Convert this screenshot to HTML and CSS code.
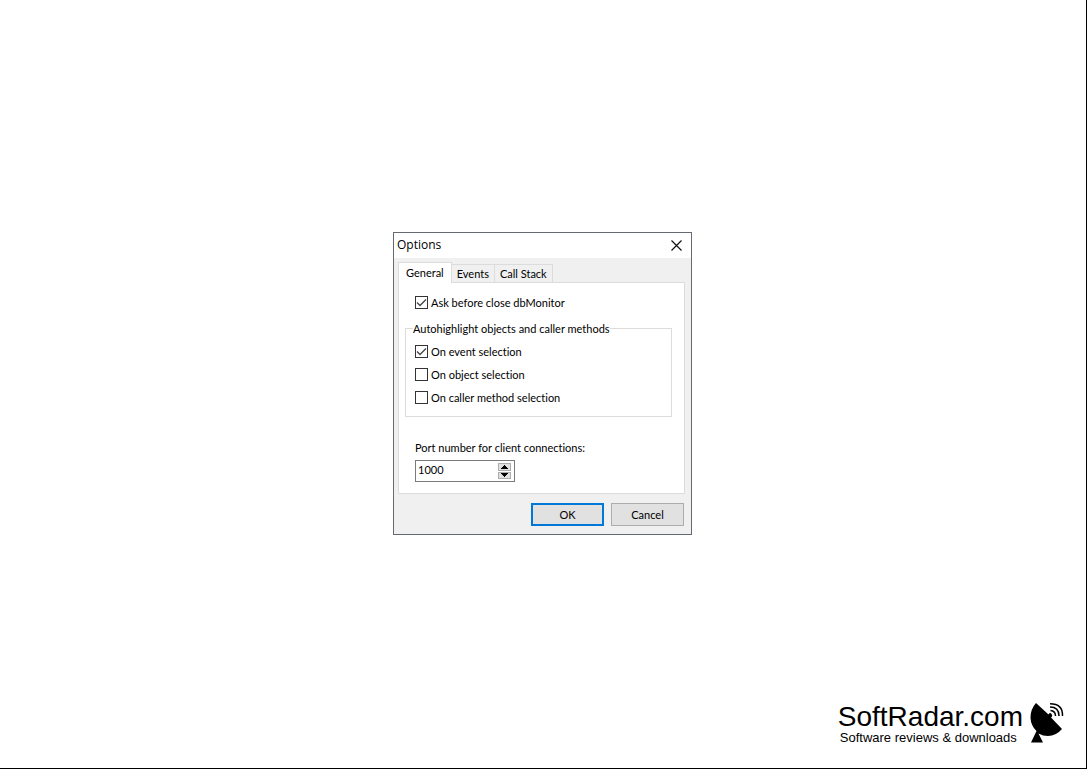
FILE: index.html
```html
<!DOCTYPE html>
<html lang="en">
<head>
<meta charset="utf-8">
<title>Options</title>
<link rel="stylesheet" href="styles.css">
</head>
<body>
<main class="stage">
  <form class="dialog" role="dialog" aria-labelledby="dialog-title">
    <header class="titlebar">
      <h1 class="title" id="dialog-title">Options</h1>
      <button class="close" type="button" aria-label="Close">
        <svg width="11" height="11" viewBox="0 0 11 11"><path d="M.5 .5l10 10M10.500 .5l-10 10" fill="none" stroke="#111" stroke-width="1.200"/></svg>
      </button>
    </header>
    <div class="content">
      <div class="tabs" role="tablist">
        <button class="tab tab-active" type="button" role="tab" aria-selected="true">General</button>
        <button class="tab" type="button" role="tab" aria-selected="false">Events</button>
        <button class="tab" type="button" role="tab" aria-selected="false">Call Stack</button>
      </div>
      <section class="panel" role="tabpanel">
        <label class="option option-first"><input class="check" type="checkbox" checked>Ask before close dbMonitor</label>
        <fieldset class="group">
          <legend class="legend">Autohighlight objects and caller methods</legend>
          <div class="options">
            <label class="option"><input class="check" type="checkbox" checked>On event selection</label>
            <label class="option"><input class="check" type="checkbox">On object selection</label>
            <label class="option"><input class="check" type="checkbox">On caller method selection</label>
          </div>
        </fieldset>
        <div class="port">
          <label for="port">Port number for client connections:</label>
          <div class="spinbox">
            <input class="number" id="port" type="text" inputmode="numeric" value="1000">
            <div class="arrows">
              <button class="arrow" type="button" aria-label="Increase"><svg width="7" height="4" viewBox="0 0 7 4"><path d="M3 0h1v1h1v1h1v1h1v1H0V3h1V2h1V1h1z"/></svg></button>
              <button class="arrow" type="button" aria-label="Decrease"><svg width="7" height="4" viewBox="0 0 7 4"><path d="M0 0h7v1H6v1H5v1H4v1H3V3H2V2H1V1H0z"/></svg></button>
            </div>
          </div>
        </div>
      </section>
      <div class="actions">
        <button class="button button-default" type="submit">OK</button>
        <button class="button" type="button">Cancel</button>
      </div>
    </div>
  </form>
  <footer class="brand">
    <div>
      <div class="brand-name">SoftRadar.com</div>
      <div class="brand-line">Software reviews &amp; downloads</div>
    </div>
    <svg class="dish" width="34" height="42" viewBox="0 0 34 42">
      <path d="M6 0L18.500 11.500Q20 9 21.500 11T21 14.500L32 26Q26 33 18 33Q13 33 8.500 30.500L13 39.500H1L6.500 28Q1 23 .5 15Q.5 6 6 0z"/>
      <path d="M20.500 7.500Q25.500 8 25.500 13M20 4Q29 4 29 13M20 .8Q33 .8 32.500 13" fill="none" stroke="#000" stroke-width="1.500"/>
    </svg>
  </footer>
</main>
</body>
</html>
```
FILE: styles.css
```css
* { box-sizing: border-box; }

body {
  margin: 0;
  background: #fff;
  color: #000;
  font: 11px/13px Lato, "Liberation Sans", sans-serif;
  font-variant-ligatures: none;
}

button, input { font: inherit; color: inherit; }
button { padding: 0; }

.stage {
  min-height: 100vh;
  display: grid;
  grid-template-rows: 1fr auto 1fr;
  justify-items: center;
  padding: 0 1px 1px 0;
  border: solid #000;
  border-width: 0 1px 1px 0;
}

.dialog {
  grid-row: 2;
  width: 299px;
  border: 1px solid #646a70;
  background: #f0f0f0;
}

.titlebar {
  display: flex;
  align-items: center;
  justify-content: space-between;
  height: 25px;
  padding: 0 9px 1px 3px;
  background: #fff;
}

.title {
  margin: 0;
  font: 12px/16px "Open Sans", sans-serif;
}

.close {
  display: flex;
  border: 0;
  background: none;
}

.content { padding: 4px 6px 8px 4px; }

.tabs {
  display: flex;
  align-items: flex-end;
}

.tab {
  height: 18px;
  padding: 0 5px;
  border: 1px solid #dcdcdc;
  border-width: 1px 1px 0 0;
  background: #f0f0f0;
}

.tab-active {
  height: 21px;
  margin-bottom: -1px;
  padding: 0 7px 2px;
  border-left-width: 1px;
  background: #fff;
}

.panel {
  padding: 13px 12px 11px 6px;
  border: 1px solid #dcdcdc;
  background: #fff;
}

.option {
  display: flex;
  align-items: center;
  gap: 3px;
}

.option-first { margin-left: 10px; }

.check {
  appearance: none;
  width: 13px;
  height: 13px;
  margin: 0;
  border: 1px solid #333;
  background: #fff;
}

.check:checked {
  background: #fff url("data:image/svg+xml,%3Csvg xmlns='http://www.w3.org/2000/svg' viewBox='0 0 11 11'%3E%3Cpath d='M1 5.500l3 3 6-6' fill='none' stroke='%23444' stroke-width='1.300'/%3E%3C/svg%3E") center / 11px;
}

.group {
  margin: 13px 0 24px;
  padding: 10px 9px 12px;
  border: 1px solid #dcdcdc;
}

.legend {
  margin-left: -2px;
  padding: 0;
}

.options {
  display: grid;
  gap: 10px;
}

.port {
  display: grid;
  gap: 6px;
  justify-items: start;
  padding-left: 10px;
}

.spinbox {
  display: flex;
  width: 100px;
  height: 22px;
  padding: 2px 3px 2px 2px;
  border: 1px solid #7a7a7a;
}

.number {
  flex: 1;
  min-width: 0;
  height: 13px;
  padding: 0;
  border: 0;
  outline: 0;
  background: none;
}

.arrows {
  display: grid;
  gap: 1px;
  width: 13px;
}

.arrow {
  display: flex;
  align-items: center;
  justify-content: center;
  border: 1px solid #adadad;
  background: #e1e1e1;
}

.actions {
  display: flex;
  justify-content: flex-end;
  gap: 7px;
  padding: 9px 1px 0 0;
}

.button {
  width: 73px;
  height: 23px;
  border: 1px solid #adadad;
  background: #e1e1e1;
}

.button-default { border: 2px solid #0078d7; }

.brand {
  grid-row: 3;
  align-self: end;
  justify-self: end;
  display: flex;
  gap: 7px;
  padding: 0 21px 22px 0;
  font-family: "Liberation Sans", Arial, sans-serif;
}

.brand-name {
  font-size: 28px;
  line-height: 28px;
}

.brand-line {
  padding-left: 2px;
  font-size: 13px;
  line-height: 14px;
}
```
